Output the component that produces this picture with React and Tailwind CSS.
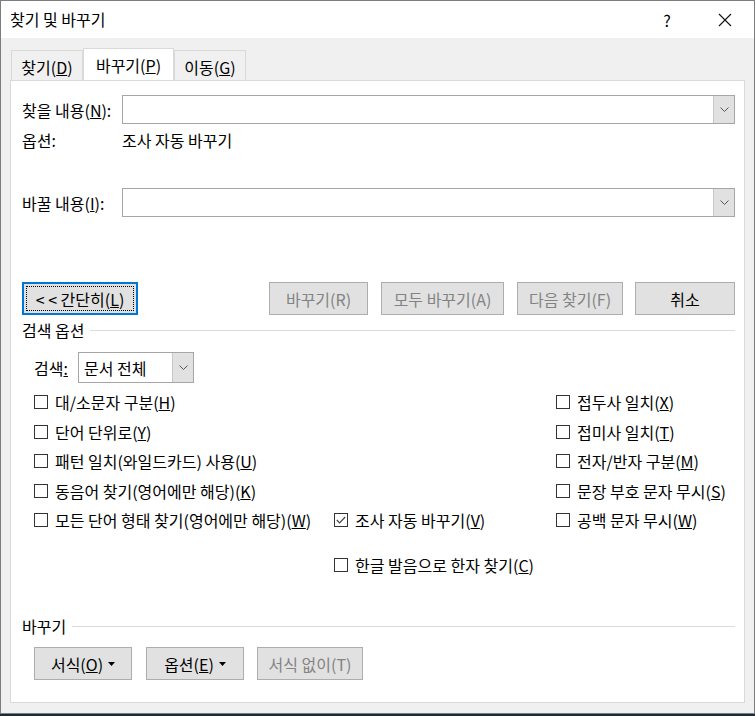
import React from "react";

const font = "font-['Noto_Sans_CJK_KR','Noto_Sans',sans-serif]";

const Chevron = () => (
  <svg width="9" height="5" viewBox="0 0 9 5" fill="none" stroke="#555" strokeWidth="1">
    <path d="M0.5 0.5 L4.5 4.5 L8.5 0.5" />
  </svg>
);

const Caret = () => (
  <svg width="7" height="4" viewBox="0 0 7 4" className="ml-[5px]">
    <path d="M0 0 H7 L3.5 4 Z" fill="#000" />
  </svg>
);

const Combo = ({ className = "", children }) => (
  <div className={`flex border border-[#a6a6a6] bg-white ${className}`}>
    <div className="flex-1 flex items-center pl-[4px]">{children}</div>
    <div className="w-[21px] bg-[#e1e1e1] border-l border-[#c8c8c8] flex items-center justify-center">
      <Chevron />
    </div>
  </div>
);

const Button = ({ width, disabled, children }) => (
  <div
    className={`h-[33px] flex items-center justify-center border border-[#adadad] bg-[#e1e1e1] ${width} ${
      disabled ? "text-[#838383]" : "text-black"
    }`}
  >
    {children}
  </div>
);

const Check = ({ checked, children }) => (
  <div className="flex items-center h-full">
    <div className="w-[14px] h-[14px] border border-[#333] bg-white flex items-center justify-center shrink-0">
      {checked && (
        <svg width="10" height="8" viewBox="0 0 10 8" fill="none" stroke="#444" strokeWidth="1.2">
          <path d="M0.8 4 L3.6 6.8 L9.2 1" />
        </svg>
      )}
    </div>
    <span className="ml-[7px] whitespace-nowrap">{children}</span>
  </div>
);

const Tab = ({ active, children, width }) =>
  active ? (
    <div className={`h-[33px] -mb-px bg-white border border-b-0 border-[#d9d9d9] flex items-center justify-center ${width}`}>
      {children}
    </div>
  ) : (
    <div className={`h-[30px] bg-[#f0f0f0] border border-b-0 border-[#d9d9d9] flex items-center justify-center pt-[2px] ${width}`}>
      {children}
    </div>
  );

const GroupTitle = ({ children }) => (
  <div className="h-[20px] flex items-center">
    <span className="whitespace-nowrap">{children}</span>
    <div className="flex-1 ml-[6px] h-px bg-[#dcdcdc]" />
  </div>
);

export default function App() {
  return (
    <div className={`w-[755px] h-[716px] bg-[#1e2a33] ${font} text-[16px] leading-[20px] text-black`}>
      <div className="w-[755px] h-[714px] border border-[#7d7d7d] bg-[#f0f0f0] flex flex-col">
        {/* title bar */}
        <div className="h-[37px] bg-white flex items-center pl-[9px] shrink-0">
          <span className="flex-1 pb-[1px]">찾기 및 바꾸기</span>
          <span className="w-[20px] text-center mr-[41px] text-[16px]">?</span>
          <svg width="14" height="14" viewBox="0 0 14 14" stroke="#111" strokeWidth="1.1" className="mr-[22px]">
            <path d="M1 1 L13 13 M13 1 L1 13" />
          </svg>
        </div>

        {/* tabs */}
        <div className="flex items-end pl-[10px] pt-[10px] shrink-0">
          <Tab width="w-[72px]">
            찾기(<u>D</u>)
          </Tab>
          <Tab active width="w-[91px]">
            바꾸기(<u>P</u>)
          </Tab>
          <Tab width="w-[72px]">
            이동(<u>G</u>)
          </Tab>
        </div>

        {/* panel */}
        <div className="mx-[9px] mb-[10px] flex-1 bg-white border border-[#d9d9d9] pl-[11px] pr-[9px] flex flex-col">
          <div className="mt-[14px] h-[29px] flex items-center">
            <span className="w-[100px]">
              찾을 내용(<u>N</u>):
            </span>
            <Combo className="flex-1 h-[29px]" />
          </div>

          <div className="mt-[6px] h-[20px] flex items-center">
            <span className="w-[100px]">옵션:</span>
            <span>조사 자동 바꾸기</span>
          </div>

          <div className="mt-[38px] h-[29px] flex items-center">
            <span className="w-[100px]">
              바꿀 내용(<u>I</u>):
            </span>
            <Combo className="flex-1 h-[29px]" />
          </div>

          {/* action buttons */}
          <div className="mt-[65px] flex items-center">
            <div className="w-[116px] h-[33px] border-2 border-[#0078d7] bg-[#e1e1e1] p-[2px]">
              <div className="w-full h-full border border-dotted border-black flex items-center justify-center">
                &lt; &lt; 간단히(<u>L</u>)
              </div>
            </div>
            <div className="flex-1" />
            <Button width="w-[99px]" disabled>
              바꾸기(R)
            </Button>
            <div className="w-[13px]" />
            <Button width="w-[123px]" disabled>
              모두 바꾸기(A)
            </Button>
            <div className="w-[13px]" />
            <Button width="w-[106px]" disabled>
              다음 찾기(F)
            </Button>
            <div className="w-[12px]" />
            <Button width="w-[100px]">취소</Button>
          </div>

          {/* search options */}
          <div className="mt-[5px]">
            <GroupTitle>검색 옵션</GroupTitle>
          </div>

          <div className="mt-[12px] ml-[12px] flex items-center h-[31px]">
            <span className="w-[44px]">
              검색<u>:</u>
            </span>
            <Combo className="w-[116px] h-[31px]">
              <span className="pl-[1px]">문서 전체</span>
            </Combo>
          </div>

          <div className="mt-[4px] ml-[12px] flex flex-col">
            <div className="h-[30px] flex">
              <div className="w-[300px]">
                <Check>
                  대/소문자 구분(<u>H</u>)
                </Check>
              </div>
              <div className="w-[222px]" />
              <Check>
                접두사 일치(<u>X</u>)
              </Check>
            </div>
            <div className="h-[29px] flex">
              <div className="w-[300px]">
                <Check>
                  단어 단위로(<u>Y</u>)
                </Check>
              </div>
              <div className="w-[222px]" />
              <Check>
                접미사 일치(<u>T</u>)
              </Check>
            </div>
            <div className="h-[30px] flex">
              <div className="w-[300px]">
                <Check>
                  패턴 일치(와일드카드) 사용(<u>U</u>)
                </Check>
              </div>
              <div className="w-[222px]" />
              <Check>
                전자/반자 구분(<u>M</u>)
              </Check>
            </div>
            <div className="h-[29px] flex">
              <div className="w-[300px]">
                <Check>
                  동음어 찾기(영어에만 해당)(<u>K</u>)
                </Check>
              </div>
              <div className="w-[222px]" />
              <Check>
                문장 부호 문자 무시(<u>S</u>)
              </Check>
            </div>
            <div className="h-[30px] flex">
              <div className="w-[300px]">
                <Check>
                  모든 단어 형태 찾기(영어에만 해당)(<u>W</u>)
                </Check>
              </div>
              <div className="w-[222px]">
                <Check checked>
                  조사 자동 바꾸기(<u>V</u>)
                </Check>
              </div>
              <Check>
                공백 문자 무시(<u>W</u>)
              </Check>
            </div>
            <div className="mt-[15px] h-[30px] flex">
              <div className="w-[300px]" />
              <Check>
                한글 발음으로 한자 찾기(<u>C</u>)
              </Check>
            </div>
          </div>

          {/* replace group */}
          <div className="mt-[36px]">
            <GroupTitle>바꾸기</GroupTitle>
          </div>

          <div className="mt-[11px] ml-[12px] flex items-center">
            <Button width="w-[98px]">
              서식(<u>O</u>)
              <Caret />
            </Button>
            <div className="w-[14px]" />
            <Button width="w-[98px]">
              옵션(<u>E</u>)
              <Caret />
            </Button>
            <div className="w-[13px]" />
            <Button width="w-[106px]" disabled>
              서식 없이(T)
            </Button>
          </div>
        </div>
      </div>
    </div>
  );
}
